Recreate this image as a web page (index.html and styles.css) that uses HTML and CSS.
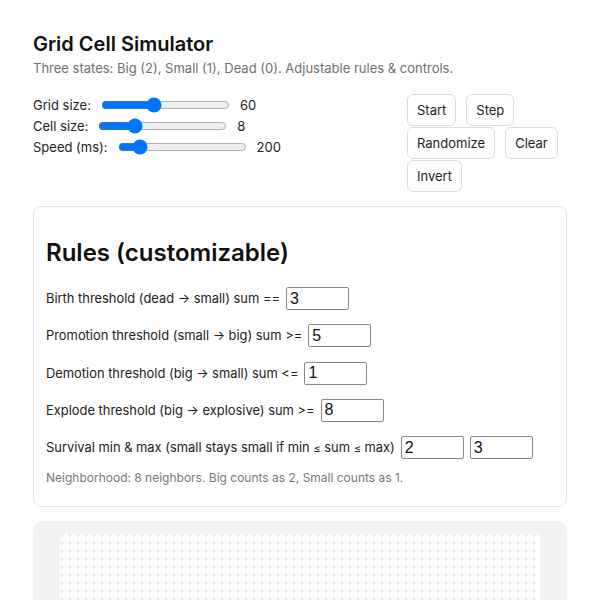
FILE: index.html
```html
<!DOCTYPE html>
<html lang="en">
<head>
<meta charset="utf-8">
<title>Grid Cell Simulator</title>
<link rel="stylesheet" href="styles.css">
</head>
<body>
<div class="app">
  <h1 class="title">Grid Cell Simulator</h1>
  <p class="subtitle">Three states: Big (2), Small (1), Dead (0). Adjustable rules &amp; controls.</p>

  <div class="controls">
    <div class="sliders">
      <div class="slider-row">
        <label>Grid size:</label>
        <input type="range" min="20" max="120" value="60">
        <span class="val">60</span>
      </div>
      <div class="slider-row">
        <label>Cell size:</label>
        <input type="range" min="4" max="20" value="8">
        <span class="val">8</span>
      </div>
      <div class="slider-row">
        <label>Speed (ms):</label>
        <input type="range" min="50" max="1200" step="10" value="200">
        <span class="val">200</span>
      </div>
    </div>
    <div class="actions">
      <button class="btn">Start</button>
      <button class="btn">Step</button>
      <button class="btn">Randomize</button>
      <button class="btn">Clear</button>
      <button class="btn">Invert</button>
    </div>
  </div>

  <section class="card rules">
    <h2 class="rules-title">Rules (customizable)</h2>
    <div class="rule-list">
      <div class="rule"><span>Birth threshold (dead → small) sum ==</span><input class="num" type="text" value="3"></div>
      <div class="rule"><span>Promotion threshold (small → big) sum &gt;=</span><input class="num" type="text" value="5"></div>
      <div class="rule"><span>Demotion threshold (big → small) sum &lt;=</span><input class="num" type="text" value="1"></div>
      <div class="rule"><span>Explode threshold (big → explosive) sum &gt;=</span><input class="num" type="text" value="8"></div>
      <div class="rule"><span>Survival min &amp; max (small stays small if min <span class="le">≤</span> sum <span class="le">≤</span> max)</span><input class="num" type="text" value="2"><input class="num" type="text" value="3"></div>
    </div>
    <p class="note">Neighborhood: 8 neighbors. Big counts as 2, Small counts as 1.</p>
  </section>

  <section class="board-wrap">
    <div class="board"></div>
  </section>
</div>
</body>
</html>
```

FILE: styles.css
```css
html, body {
  margin: 0;
  padding: 0;
  background: #ffffff;
}

body {
  font-family: Inter, "Noto Sans", sans-serif;
  color: #1a1a1a;
  font-size: 13px;
}

.app {
  width: 534px;
  margin: 0 auto;
  padding-top: 32px;
}

.title {
  margin: 0;
  font-size: 20px;
  font-weight: 600;
  line-height: 24px;
  color: #111;
}

.subtitle {
  margin: 4px 0 0;
  font-size: 13px;
  line-height: 16px;
  color: #707070;
}

.controls {
  display: flex;
  justify-content: space-between;
  align-items: flex-start;
  margin-top: 18px;
}

.sliders {
  display: flex;
  flex-direction: column;
}

.slider-row {
  display: flex;
  align-items: center;
  gap: 8px;
  height: 21px;
  color: #222;
}

.slider-row input[type="range"] {
  margin: 2px;
  width: 129px;
}

.actions {
  width: 160px;
  display: flex;
  flex-wrap: wrap;
  column-gap: 10px;
  row-gap: 1px;
}

.btn {
  font-family: Inter, "Noto Sans", sans-serif;
  font-size: 13px;
  line-height: 16px;
  color: #222;
  background: #fff;
  border: 1px solid #dddddd;
  border-radius: 6px;
  padding: 7px 9px;
}

.card {
  border: 1px solid #e6e6e6;
  border-radius: 8px;
}

.rules {
  margin-top: 14px;
  padding: 12px 12px 20px;
}

.rules-title {
  margin: 20px 0;
  font-size: 24px;
  font-weight: 600;
  line-height: 28px;
  color: #111;
}

.rule-list {
  display: flex;
  flex-direction: column;
  gap: 14.25px;
}

.rule {
  display: flex;
  align-items: center;
  gap: 6px;
  color: #222;
  font-size: 12.9px;
}

.le {
  font-size: 11px;
}

.num {
  box-sizing: border-box;
  width: 63px;
  height: 23px;
  font-family: "Liberation Sans", Arial, sans-serif;
  font-size: 16px;
  padding: 1px 3px;
  border: 1px solid #8a8a8a;
  border-radius: 2px;
  color: #111;
}

.note {
  margin: 11px 0 0;
  font-size: 12px;
  line-height: 16px;
  color: #777;
}

.board-wrap {
  margin-top: 14px;
  background: #f2f2f2;
  border-radius: 10px;
  padding: 12px;
  display: flex;
  justify-content: center;
}

.board {
  width: 480px;
  height: 480px;
  border-radius: 6px;
  background-color: #fff;
  background-image:
    radial-gradient(circle, #e9e9e9 1.1px, transparent 1.8px),
    linear-gradient(to right, #f7f7f7 1px, transparent 1px),
    linear-gradient(to bottom, #f7f7f7 1px, transparent 1px);
  background-size: 8px 8px;
  background-position: -2px -2px, 1px 0, 0 1px;
}
```
